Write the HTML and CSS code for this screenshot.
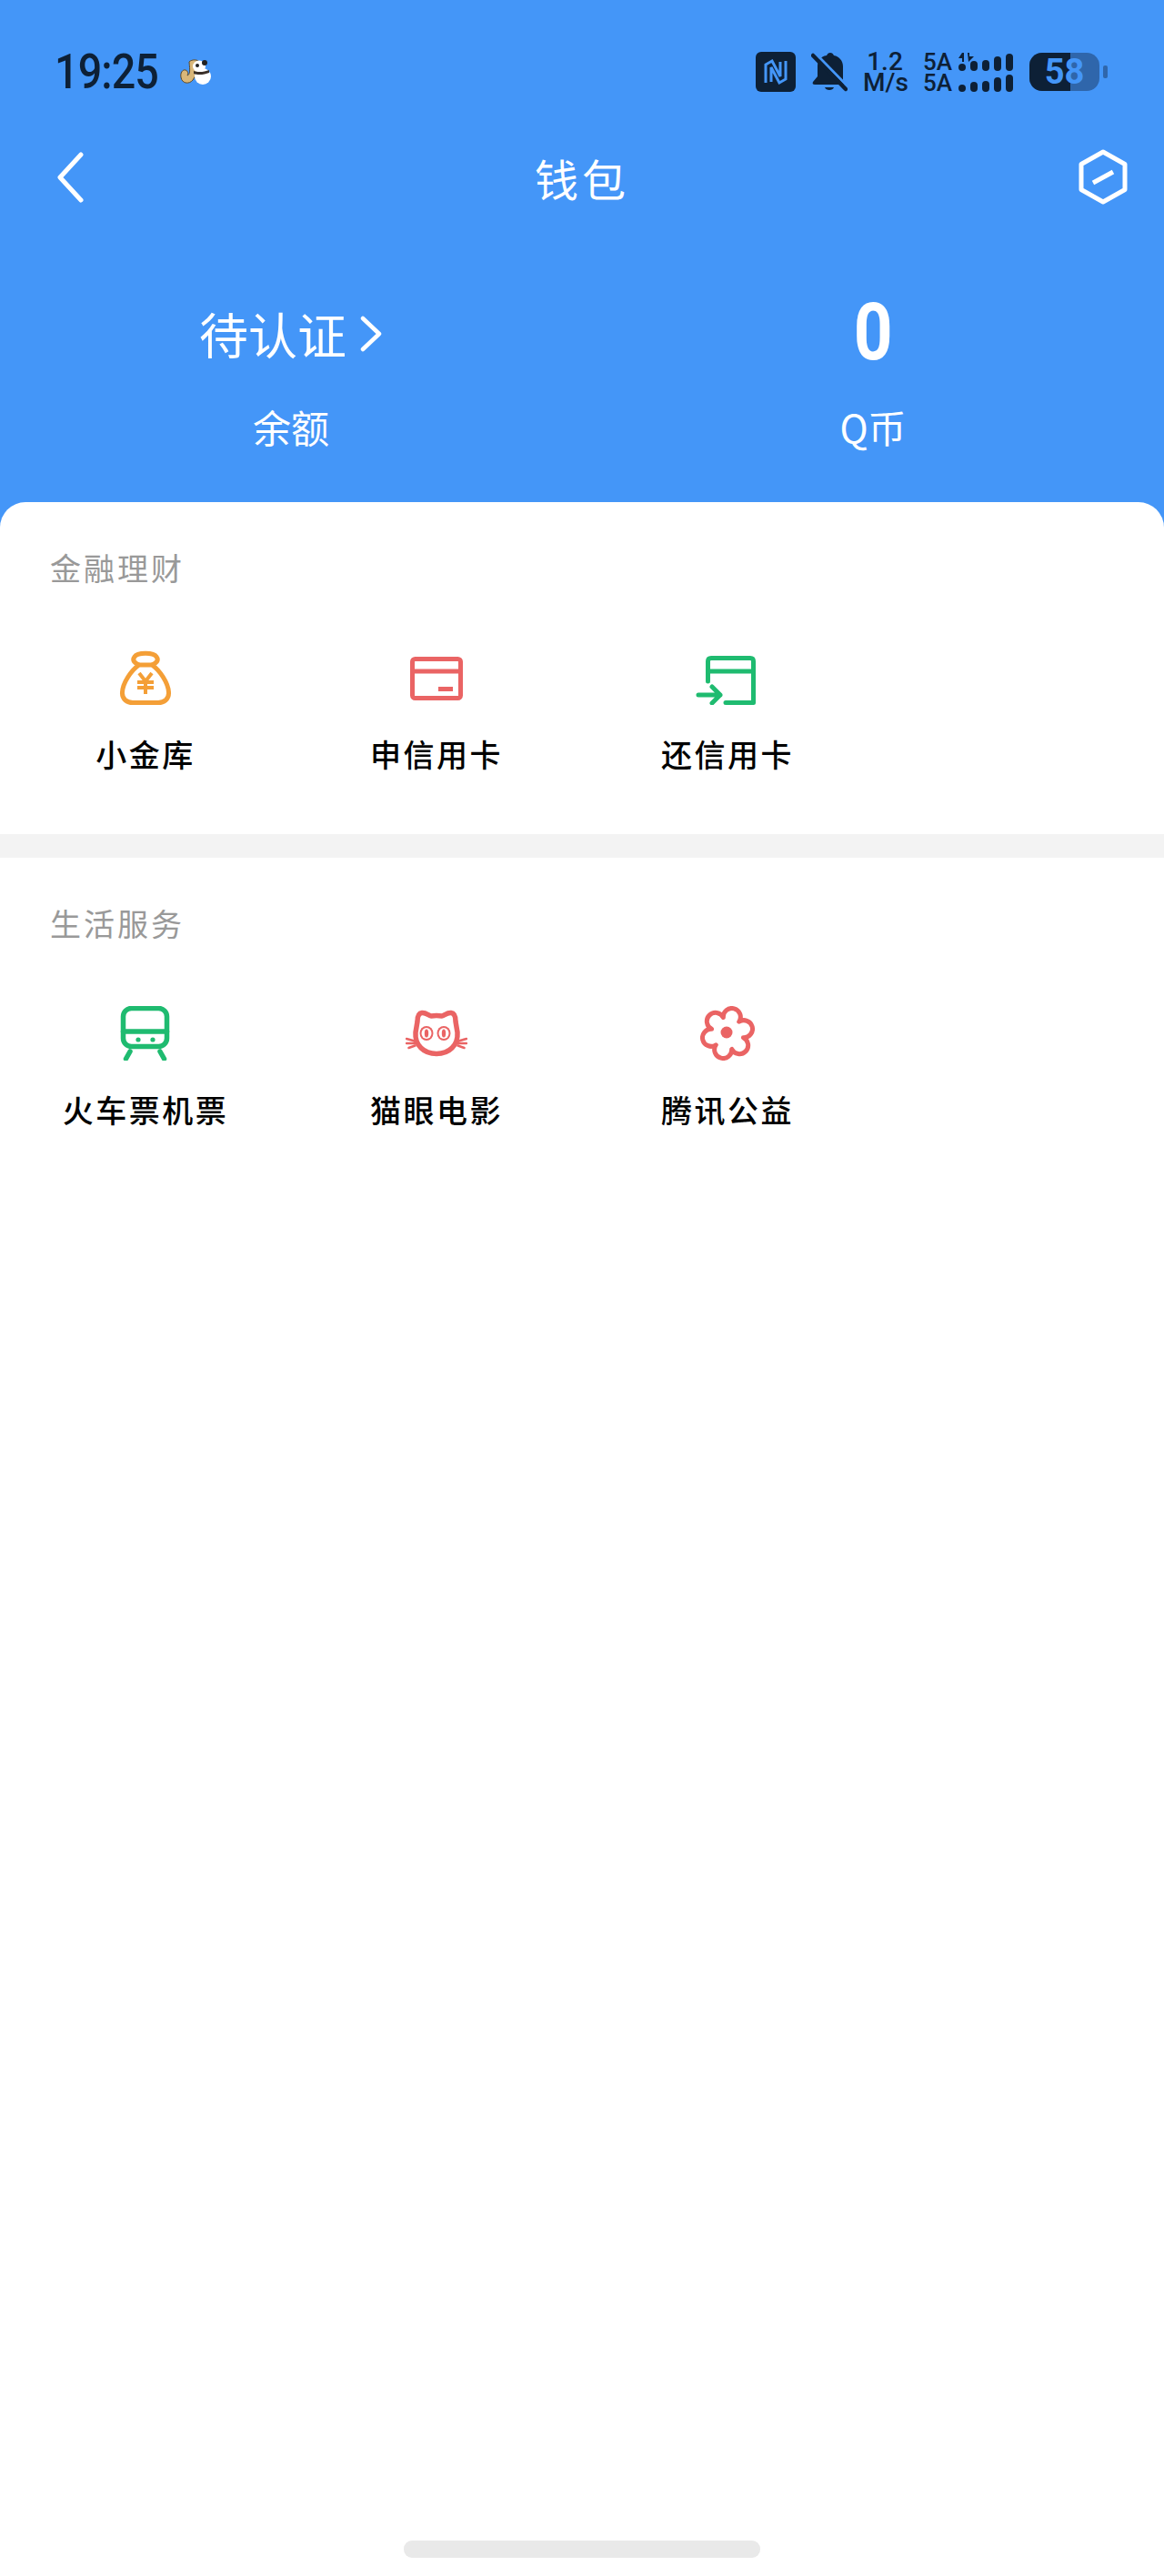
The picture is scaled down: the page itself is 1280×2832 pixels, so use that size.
FILE: index.html
```html
<!DOCTYPE html>
<html lang="zh-CN">

<head>
    <meta charset="UTF-8">
    <meta name="viewport" content="width=device-width, initial-scale=1.0">
    <title>钱包</title>
    <link rel="stylesheet" href="styles.css">
</head>

<body>
    <div class="page">
        <div class="hero">
            <!-- status bar -->
            <div class="status-bar">
                <div class="status-left">
                    <span class="time">19:25</span>
                    <svg class="panda" viewBox="0 0 34 28">
                        <path d="M10 3 C13 0 20 0 22 4 L21 12 L14 23 C10 28 2 27 1 20 C0 15 3 11 6 12 C9 13 9 16 8 18 C11 17 11 13 10 3 Z" fill="#d9b779" stroke="#5c4a2c" stroke-width="1"/>
                        <circle cx="25" cy="19" r="9" fill="#fff"/>
                        <ellipse cx="21" cy="8" rx="7" ry="6.5" fill="#fff"/>
                        <circle cx="27" cy="4" r="3" fill="#222"/>
                        <circle cx="19" cy="7" r="2" fill="#222"/>
                        <path d="M15 13 C20 15 27 14 32 12 L32 15 C27 17 20 18 15 16 Z" fill="#3a2f28"/>
                    </svg>
                </div>
                <div class="status-right">
                    <svg class="nfc" viewBox="0 0 44 44">
                        <rect width="44" height="44" rx="6" fill="#0d2036"/>
                        <path d="M11 34 V14 L18 10 L27 27 V11 M33 10 V30 L26 34 L17 17 V33" fill="none" stroke="#4496f8" stroke-width="3"/>
                    </svg>
                    <svg class="bell" viewBox="0 0 40 44">
                        <path d="M21 1 C19 1 18 2 17 4 C10 5 7 10 7 16 V27 L2 33 C1 35 2 36 4 36 H35 C37 36 37 34 36 33 L35 31 V16 C35 10 31 5 25 4 C24 2 23 1 21 1 Z" fill="#0d2036"/>
                        <path d="M15 39 H25 C24 43 16 43 15 39 Z" fill="#0d2036"/>
                        <path d="M5 2 L40 38" stroke="#4496f8" stroke-width="3"/>
                        <path d="M2 4 L38 41" stroke="#0d2036" stroke-width="4.5" stroke-linecap="round"/>
                    </svg>
                    <div class="speed">1.2<br>M/s</div>
                    <div class="signal">
                        <div class="signal-row">
                            <span class="net">5A</span>
                            <span class="bars">
                                <i class="b1"></i><i class="b2"></i><i class="b3"></i><i class="b4"></i><i class="b5"></i>
                            </span>
                            <svg class="arrows" viewBox="0 0 18 10">
                                <path d="M4 0 L0 6 H4 V10 H6 V0 Z M10 0 H12 V4 H17 L11 10 Z" fill="#0d2036"/>
                            </svg>
                        </div>
                        <div class="signal-row">
                            <span class="net">5A</span>
                            <span class="bars">
                                <i class="b1"></i><i class="b2"></i><i class="b3"></i><i class="b4"></i><i class="b5"></i>
                            </span>
                        </div>
                    </div>
                    <div class="battery">
                        <div class="battery-body">
                            <div class="battery-fill" style="width: 58%"></div>
                            <span class="battery-num">58</span>
                        </div>
                        <div class="battery-tip"></div>
                    </div>
                </div>
            </div>

            <!-- title -->
            <div class="nav">
                <svg class="back" viewBox="0 0 32 56">
                    <path d="M27 3 L4 28 L27 53" fill="none" stroke="#fff" stroke-width="5" stroke-linecap="round" stroke-linejoin="round"/>
                </svg>
                <h1 class="nav-title">钱包</h1>
                <svg class="hex" viewBox="0 0 56 62">
                    <path d="M28 3 L52 16.5 V44.5 L28 58 L4 44.5 V16.5 Z" fill="none" stroke="#fff" stroke-width="5" stroke-linejoin="round"/>
                    <path d="M17 37 L39 25" stroke="#fff" stroke-width="5"/>
                </svg>
            </div>

            <div class="stats">
                <div class="stat">
                    <div class="stat-value">
                        <span class="pending">待认证</span>
                        <svg class="more" viewBox="0 0 26 40">
                            <path d="M4 3 L22 20 L4 37" fill="none" stroke="#fff" stroke-width="4.5" stroke-linecap="round" stroke-linejoin="round"/>
                        </svg>
                    </div>
                    <div class="stat-label">余额</div>
                </div>
                <div class="stat">
                    <div class="stat-value"><span class="coin">0</span></div>
                    <div class="stat-label">Q币</div>
                </div>
            </div>
        </div>

        <div class="sheet">
            <div class="section">
                <h2 class="section-title">金融理财</h2>
                <div class="grid">
                    <div class="item">
                        <svg class="icon icon-60" viewBox="0 0 60 60">
                            <g fill="none" stroke="#f49f37" stroke-width="5" stroke-linejoin="round">
                                <path d="M23 16 C14 22 5 36 4.5 46 C4 54 10 57.5 16 57.5 H44 C50 57.5 56 54 55.5 46 C55 36 46 22 37 16 Z"/>
                                <path d="M23 16 C18 14 15 11 18 7 C21 2 39 2 42 7 C45 11 42 14 37 16"/>
                                <path d="M23 25 L30 34 L37 25 M21 35 H39 M21 41 H39 M30 34 V48" stroke-width="4" stroke-linejoin="miter"/>
                            </g>
                        </svg>
                        <div class="item-label">小金库</div>
                    </div>
                    <div class="item">
                        <svg class="icon icon-60" viewBox="0 0 60 60">
                            <rect x="3.5" y="9.5" width="53" height="43" rx="3" fill="none" stroke="#ea6464" stroke-width="5"/>
                            <path d="M3.5 23 H56.5" stroke="#ea6464" stroke-width="5"/>
                            <rect x="32" y="40" width="16" height="5" fill="#ea6464"/>
                        </svg>
                        <div class="item-label">申信用卡</div>
                    </div>
                    <div class="item">
                        <svg class="icon icon-70" viewBox="0 0 70 60">
                            <g fill="none" stroke="#1fbb70" stroke-width="5" stroke-linecap="round" stroke-linejoin="round">
                                <path d="M13.5 34 V12 Q13.5 8.5 17 8.5 H60 Q63.5 8.5 63.5 12 V57.5 H33"/>
                                <path d="M13.5 23 H63.5"/>
                                <path d="M3 49 H27 M18 40 L27 49 L18 58"/>
                            </g>
                        </svg>
                        <div class="item-label">还信用卡</div>
                    </div>
                </div>
            </div>

            <div class="divider"></div>

            <div class="section">
                <h2 class="section-title">生活服务</h2>
                <div class="grid">
                    <div class="item">
                        <svg class="icon icon-60" viewBox="0 0 60 60">
                            <g fill="none" stroke="#1fbb70" stroke-width="5.5" stroke-linecap="round">
                                <rect x="5.5" y="2.5" width="48" height="42" rx="9"/>
                                <path d="M5.5 28 H53.5"/>
                                <path d="M13 50 L8.5 58 M46 50 L50.5 58"/>
                            </g>
                            <circle cx="22" cy="37" r="2.6" fill="#1fbb70"/>
                            <circle cx="38" cy="37" r="2.6" fill="#1fbb70"/>
                        </svg>
                        <div class="item-label">火车票机票</div>
                    </div>
                    <div class="item">
                        <svg class="icon icon-cat" viewBox="0 0 68 60">
                            <g fill="none" stroke="#ea6464" stroke-width="5.5" stroke-linejoin="round">
                                <path d="M18 4.5 C22 4 25 7 28 8 C31 7.5 37 7.5 40 8 C43 7 46 4 50 4.5 C54 5 55 9 55 14 L57 26 C58 40 48 49.5 34 49.5 C20 49.5 10 40 11 26 L13 14 C13 9 14 5 18 4.5 Z"/>
                            </g>
                            <ellipse cx="23" cy="27" rx="7.5" ry="8" fill="#ea6464"/>
                            <ellipse cx="23" cy="27" rx="5.5" ry="6" fill="#fff"/>
                            <ellipse cx="23" cy="27" rx="2.2" ry="4.5" fill="#ea6464"/>
                            <ellipse cx="42" cy="27" rx="7.5" ry="8" fill="#ea6464"/>
                            <ellipse cx="42" cy="27" rx="5.5" ry="6" fill="#fff"/>
                            <ellipse cx="42" cy="27" rx="2.2" ry="4.5" fill="#ea6464"/>
                            <path d="M1 33 L10 35.5 M1 38 L10 38 M3.5 43 L10.5 40.5 M67 33 L58 35.5 M67 38 L58 38 M64.5 43 L57.5 40.5" stroke="#ea6464" stroke-width="2.5" stroke-linecap="round"/>
                        </svg>
                        <div class="item-label">猫眼电影</div>
                    </div>
                    <div class="item">
                        <svg class="icon icon-60" viewBox="0 0 60 60">
                            <path d="M25.34 12.61 A9.5 9.5 0 1 1 42.73 17.27 A9.5 9.5 0 1 1 47.39 34.66 A9.5 9.5 0 1 1 34.66 47.39 A9.5 9.5 0 1 1 17.27 42.73 A9.5 9.5 0 1 1 12.61 25.34 A9.5 9.5 0 1 1 25.34 12.61 Z" fill="none" stroke="#ea6464" stroke-width="5" stroke-linejoin="round"/>
                            <circle cx="29" cy="29" r="6.5" fill="#ea6464"/>
                        </svg>
                        <div class="item-label">腾讯公益</div>
                    </div>
                </div>
            </div>

            <div class="home-bar"></div>
        </div>
    </div>
</body>

</html>
```
FILE: styles.css
```css
* {
    padding: 0;
    margin: 0;
    box-sizing: border-box;
}

body {
    font-family: "Noto Sans CJK SC", "Roboto", sans-serif;
    background: #ffffff;
}

.page {
    display: flex;
    flex-direction: column;
    height: 100vh;
    background: #4496f8;
}

.hero {
    height: 552px;
    padding-top: 57px;
    color: #ffffff;
}

/* status bar */
.status-bar {
    display: flex;
    justify-content: space-between;
    align-items: center;
    height: 44px;
    padding: 0 62px 0 60px;
    color: #0d2036;
    font-family: "Roboto", sans-serif;
}

.status-left {
    display: flex;
    align-items: center;
}

.time {
    width: 138px;
    font-size: 53px;
    font-weight: 500;
    letter-spacing: -1px;
    line-height: 44px;
    transform: scaleX(0.88);
    transform-origin: left center;
}

.panda {
    width: 34px;
    height: 28px;
}

.status-right {
    display: flex;
    align-items: center;
}

.nfc {
    width: 44px;
    height: 44px;
    margin-right: 17px;
}

.bell {
    width: 40px;
    height: 44px;
    margin-right: 17px;
}

.speed {
    width: 48px;
    margin-right: 18px;
    font-size: 28px;
    font-weight: 500;
    line-height: 23px;
    text-align: center;
}

.signal {
    display: flex;
    flex-direction: column;
    gap: 3px;
    margin-right: 18px;
}

.signal-row {
    position: relative;
    display: flex;
    align-items: flex-end;
    gap: 7px;
    height: 20px;
}

.net {
    width: 32px;
    font-size: 26px;
    font-weight: 500;
    line-height: 20px;
}

.bars {
    display: flex;
    align-items: flex-end;
    gap: 5px;
}

.bars i {
    display: block;
    width: 8px;
    border-radius: 4px;
    background: #0d2036;
}

.bars .b1 { height: 8px; }
.bars .b2 { height: 11px; }
.bars .b3 { height: 12px; }
.bars .b4 { height: 16px; }
.bars .b5 { height: 19px; }

.arrows {
    position: absolute;
    left: 39px;
    top: 0;
    width: 18px;
    height: 10px;
}

.battery {
    display: flex;
    align-items: center;
    gap: 4px;
}

.battery-body {
    position: relative;
    display: flex;
    justify-content: center;
    align-items: center;
    width: 77px;
    height: 42px;
    border-radius: 14px;
    background: #2f66ab;
    overflow: hidden;
}

.battery-fill {
    position: absolute;
    left: 0;
    top: 0;
    height: 100%;
    background: #0d2036;
}

.battery-num {
    position: relative;
    font-size: 38px;
    font-weight: 700;
    line-height: 42px;
    color: #4496f8;
}

.battery-tip {
    width: 5px;
    height: 14px;
    border-radius: 2px;
    background: #2f66ab;
}

/* title */
.nav {
    display: grid;
    grid-template-columns: 1fr auto 1fr;
    align-items: center;
    height: 60px;
    margin-top: 63px;
    padding: 0 39px;
}

.back {
    width: 32px;
    height: 56px;
    margin-left: 23px;
}

.nav-title {
    font-size: 48px;
    font-weight: 400;
    letter-spacing: 4px;
    line-height: 60px;
}

.hex {
    justify-self: end;
    width: 56px;
    height: 62px;
}

.stats {
    display: grid;
    grid-template-columns: 1fr 1fr;
    margin-top: 108px;
}

.stat {
    display: flex;
    flex-direction: column;
    align-items: center;
}

.stat-value {
    display: flex;
    align-items: center;
    gap: 14px;
    height: 70px;
}

.pending {
    font-size: 54px;
    line-height: 70px;
}

.more {
    width: 26px;
    height: 40px;
}

.coin {
    margin-bottom: 4px;
    font-family: "Roboto", sans-serif;
    font-size: 88px;
    font-weight: 700;
    line-height: 70px;
    transform: scaleX(0.85);
}

.stat-label {
    margin-top: 42px;
    font-size: 42px;
    line-height: 50px;
}

/* white part */
.sheet {
    display: flex;
    flex-direction: column;
    flex: 1;
    background: #ffffff;
    border-radius: 28px 28px 0 0;
}

.section {
    height: 365px;
    padding-top: 55px;
}

.section-title {
    margin-left: 55px;
    font-size: 34px;
    font-weight: 400;
    letter-spacing: 3px;
    line-height: 34px;
    color: #999999;
}

.divider {
    height: 26px;
    background: #f3f3f3;
}

.grid {
    display: grid;
    grid-template-columns: repeat(4, 1fr);
    margin-top: 74px;
}

.item {
    display: flex;
    flex-direction: column;
    align-items: center;
}

.icon {
    height: 60px;
}

.icon-60 {
    width: 60px;
}

.icon-70 {
    width: 70px;
}

.icon-cat {
    width: 68px;
    margin-top: 3px;
    margin-bottom: -3px;
}

.item-label {
    margin-top: 37px;
    font-size: 34px;
    font-weight: 500;
    letter-spacing: 2.5px;
    line-height: 34px;
    color: #000000;
}

.home-bar {
    width: 392px;
    height: 19px;
    margin: auto auto 20px;
    border-radius: 9px;
    background: #e9e9e9;
}
```
